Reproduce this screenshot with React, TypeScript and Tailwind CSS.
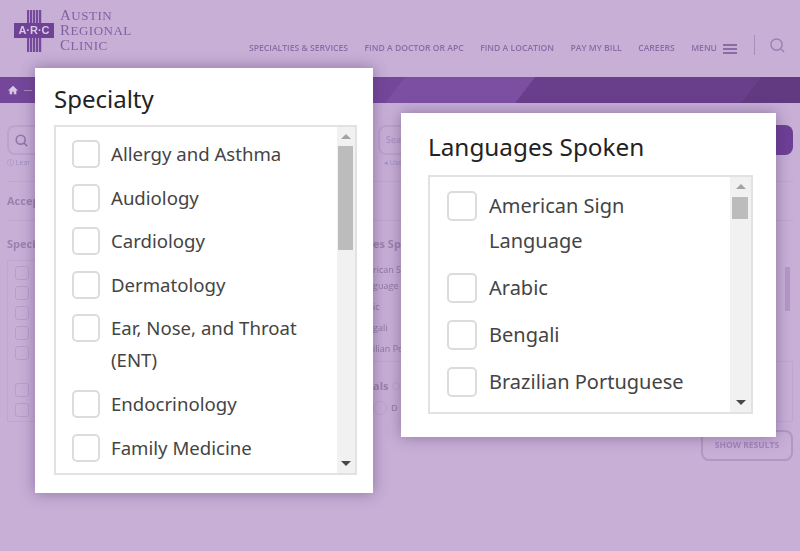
const specialties = [
  "Allergy and Asthma",
  "Audiology",
  "Cardiology",
  "Dermatology",
  "Ear, Nose, and Throat (ENT)",
  "Endocrinology",
  "Family Medicine",
];

const languages = ["American Sign Language", "Arabic", "Bengali", "Brazilian Portuguese"];

const navItems = [
  "SPECIALTIES & SERVICES",
  "FIND A DOCTOR OR APC",
  "FIND A LOCATION",
  "PAY MY BILL",
  "CAREERS",
];

// only the parts of the page that stick out from behind the two dialogs
const languageStubs = ["rican S", "guage", "ic", "gali", "ilian Po"];

function Arrow({ down, className }: { down?: boolean; className: string }) {
  return (
    <svg viewBox="0 0 10 5" className={`h-[5px] w-[10px] ${className}`}>
      <path d={down ? "M0 0h10L5 5z" : "M0 5h10L5 0z"} fill="currentColor" />
    </svg>
  );
}

function Logo() {
  return (
    <div className="flex items-center gap-[6px]">
      <div className="relative h-[42px] w-[40px]">
        <div className="absolute left-[13px] top-0 h-[42px] w-[15px] bg-[repeating-linear-gradient(90deg,#75499b_0_2px,#b398c8_2px_3px)]" />
        <div className="absolute left-0 top-[13px] flex h-[15px] w-[40px] items-center justify-center bg-[#6f4296] font-['Liberation_Sans',sans-serif] text-[11px] font-bold leading-none text-[#d9c8e4]">
          A·R·C
        </div>
      </div>
      <div className="font-['Liberation_Serif',serif] text-[15px] leading-[15px] tracking-[0.5px] text-[#8260a3]">
        <div>A<span className="text-[13px]">USTIN</span></div>
        <div>R<span className="text-[13px]">EGIONAL</span></div>
        <div>C<span className="text-[13px]">LINIC</span></div>
      </div>
    </div>
  );
}

function BackgroundPage() {
  return (
    <div className="h-full blur-[0.7px]">
      <header className="flex h-[77px] items-start justify-between pl-[14px] pr-[15px] pt-[8px]">
        <Logo />
        <div className="flex h-[64px] items-end pb-[17px]">
          <nav className="flex items-center gap-[16.5px] text-[8.6px] font-semibold text-[#8a6ba6]">
            {navItems.map((item) => (
              <span key={item}>{item}</span>
            ))}
            <span className="flex items-center gap-[6px]">
              MENU
              <span className="flex w-[14px] flex-col gap-[2px]">
                <span className="h-[2px] bg-[#8a6ba6]" />
                <span className="h-[2px] bg-[#8a6ba6]" />
                <span className="h-[2px] bg-[#8a6ba6]" />
              </span>
            </span>
          </nav>
          <div className="ml-[17px] flex items-center gap-[15px]">
            <div className="h-[20px] w-px bg-[#a88dbd]" />
            <svg viewBox="0 0 16 16" className="h-[15px] w-[15px] text-[#9a80b3]" fill="none" stroke="currentColor" strokeWidth="1.5">
              <circle cx="7" cy="7" r="6" />
              <path d="M11.5 11.5 15 15" />
            </svg>
          </div>
        </div>
      </header>

      <div className="flex h-[26px] items-center gap-[6px] bg-[linear-gradient(127.6deg,#74479a_0_321px,#7d4fa3_321px_424px,#693f8c_424px_603px,#623a81_603px)] pl-[8px]">
        <svg viewBox="0 0 12 12" className="h-[10px] w-[10px] text-[#d9c8e4]">
          <path d="M6 1 0 6.5h2V11h3V8h2v3h3V6.5h2z" fill="currentColor" />
        </svg>
        <span className="h-px w-[8px] bg-[#a88dbd]" />
      </div>

      <div className="px-[7px] pt-[22px]">
        <div className="flex items-start gap-[13px]">
          <div className="w-[358px]">
            <div className="flex h-[30px] items-center rounded-[8px] border-2 border-[#bca3ce] pl-[6px]">
              <svg viewBox="0 0 16 16" className="h-[13px] w-[13px] text-[#8f76a8]" fill="none" stroke="currentColor" strokeWidth="2">
                <circle cx="7" cy="7" r="5.5" />
                <path d="M11 11l4 4" />
              </svg>
            </div>
            <p className="pt-[3px] text-[7px] text-[#9b8fc4]">ⓘ Lear</p>
          </div>
          <div className="flex flex-1 items-start">
            <div className="flex-1">
              <div className="flex h-[30px] items-center rounded-l-[8px] border-2 border-r-0 border-[#bca3ce] pl-[6px] text-[9px] text-[#a48cba]">
                Sea
              </div>
              <p className="pl-[6px] pt-[3px] text-[7px] text-[#9b8fc4]">◂ Use</p>
            </div>
            <div className="h-[30px] w-[18px] rounded-r-[8px] bg-[#6e3f96]" />
          </div>
        </div>

        <div className="mt-[12px] border-y border-[#bfa7d0] py-[12px] text-[11px] font-bold leading-[14px] text-[#9a82ae]">Accep</div>

        <div className="mt-[16px] flex gap-[5px]">
          <div className="w-[358px]">
            <p className="pb-[9px] text-[11px] font-bold leading-[14px] text-[#9a82ae]">Speci</p>
            <div className="flex h-[162px] flex-col gap-[6px] border border-[#bfa7d0] px-[7px] pt-[5px]">
              {[0, 1, 2, 3, 4, 5, 6].map((n) => (
                <span key={n} className={`block h-[14px] w-[14px] shrink-0 rounded-[3px] border border-[#b79ecb] ${n === 4 ? "mb-[17px]" : ""}`} />
              ))}
            </div>
          </div>
          <div className="min-w-0 flex-1">
            <p className="pb-[9px] pl-[3px] text-[11px] font-bold leading-[14px] text-[#9a82ae]">es Spo</p>
            <div className="flex h-[102px] justify-between border-b border-[#bfa7d0] pl-[3px] pr-[3px] pt-[2px]">
              <div className="text-[9px] leading-[16px] text-[#8f78a6]">
                {languageStubs.map((stub, i) => (
                  <p key={stub} className={i === 0 ? "" : "mb-[5px]"}>{stub}</p>
                ))}
              </div>
              <div className="mt-[5px] h-[44px] w-[5px] bg-[#b398c8]" />
            </div>
            <div className="flex justify-between">
              <div className="pl-[3px] pt-[17px]">
                <p className="flex items-center gap-[4px] text-[11px] font-bold leading-[14px] text-[#9a82ae]">
                  als
                  <span className="h-[8px] w-[8px] rounded-full border border-[#bca3ce]" />
                </p>
                <p className="mt-[8px] flex items-center gap-[4px] text-[9px] font-semibold text-[#9a82ae]">
                  <span className="h-[14px] w-[14px] rounded-full border border-[#bca3ce]" />
                  D
                </p>
              </div>
              <div className="h-[60px] w-[93px] border-x border-b border-[#bfa7d0]" />
            </div>
          </div>
        </div>

        <div className="mt-[8px] flex justify-end">
          <button className="flex h-[31px] w-[92px] items-center justify-center rounded-[8px] border-2 border-[#b196c6] text-[8.5px] font-bold text-[#a384bf]">
            SHOW RESULTS
          </button>
        </div>
      </div>
    </div>
  );
}

function Scrollbar({ w, thumb }: { w: string; thumb: string }) {
  return (
    <div className={`relative flex shrink-0 flex-col items-center justify-between bg-[#f1f1f1] pb-[7px] pt-[7px] ${w}`}>
      <Arrow className="text-[#a3a3a3]" />
      <div className={`absolute bg-[#bcbcbc] ${thumb}`} />
      <Arrow down className="text-[#484848]" />
    </div>
  );
}

export default function App() {
  return (
    <div className="relative h-[551px] w-[800px] overflow-hidden bg-[#c7afd6] font-['Open_Sans',sans-serif]">
      <BackgroundPage />

      <section className="absolute left-[35px] top-[68px] h-[425px] w-[338px] bg-white px-[19px] pt-[15px] font-['Noto_Sans',sans-serif] shadow-[0_0_14px_rgba(70,40,95,0.45)]">
        <h2 className="text-[24px] leading-[32px] text-[#222]">Specialty</h2>
        <div className="mt-[10px] flex h-[350px] w-[303px] overflow-hidden border-2 border-[#e2e2e2]">
          <ul className="min-w-0 flex-1 pl-[16px] pr-[8px] pt-[11px] text-[18.6px] leading-[32px] text-[#444]">
            {specialties.map((name) => (
              <li key={name} className="mb-[11.6px] flex gap-[11px]">
                <span className="mt-[2px] h-[28px] w-[28px] shrink-0 rounded-[5px] border-2 border-[#dcdcdc]" />
                <span>{name}</span>
              </li>
            ))}
          </ul>
          <Scrollbar w="w-[18px]" thumb="left-[1px] top-[19px] h-[104px] w-[15px]" />
        </div>
      </section>

      <section className="absolute left-[401px] top-[113px] h-[324px] w-[375px] bg-white pl-[27px] pt-[16px] font-['Noto_Sans',sans-serif] shadow-[0_0_14px_rgba(70,40,95,0.45)]">
        <h2 className="text-[24.3px] leading-[36px] text-[#222]">Languages Spoken</h2>
        <div className="mt-[10px] flex h-[239px] w-[325px] overflow-hidden border-2 border-[#e2e2e2]">
          <ul className="min-w-0 flex-1 pl-[17px] pr-[8px] pt-[11px] text-[20px] leading-[35px] text-[#444]">
            {languages.map((name) => (
              <li key={name} className="mb-[12px] flex gap-[12px]">
                <span className="mt-[3px] h-[30px] w-[30px] shrink-0 rounded-[5px] border-2 border-[#dcdcdc]" />
                <span>{name}</span>
              </li>
            ))}
          </ul>
          <Scrollbar w="w-[21px]" thumb="left-[2px] top-[20px] h-[22px] w-[16px]" />
        </div>
      </section>
    </div>
  );
}
